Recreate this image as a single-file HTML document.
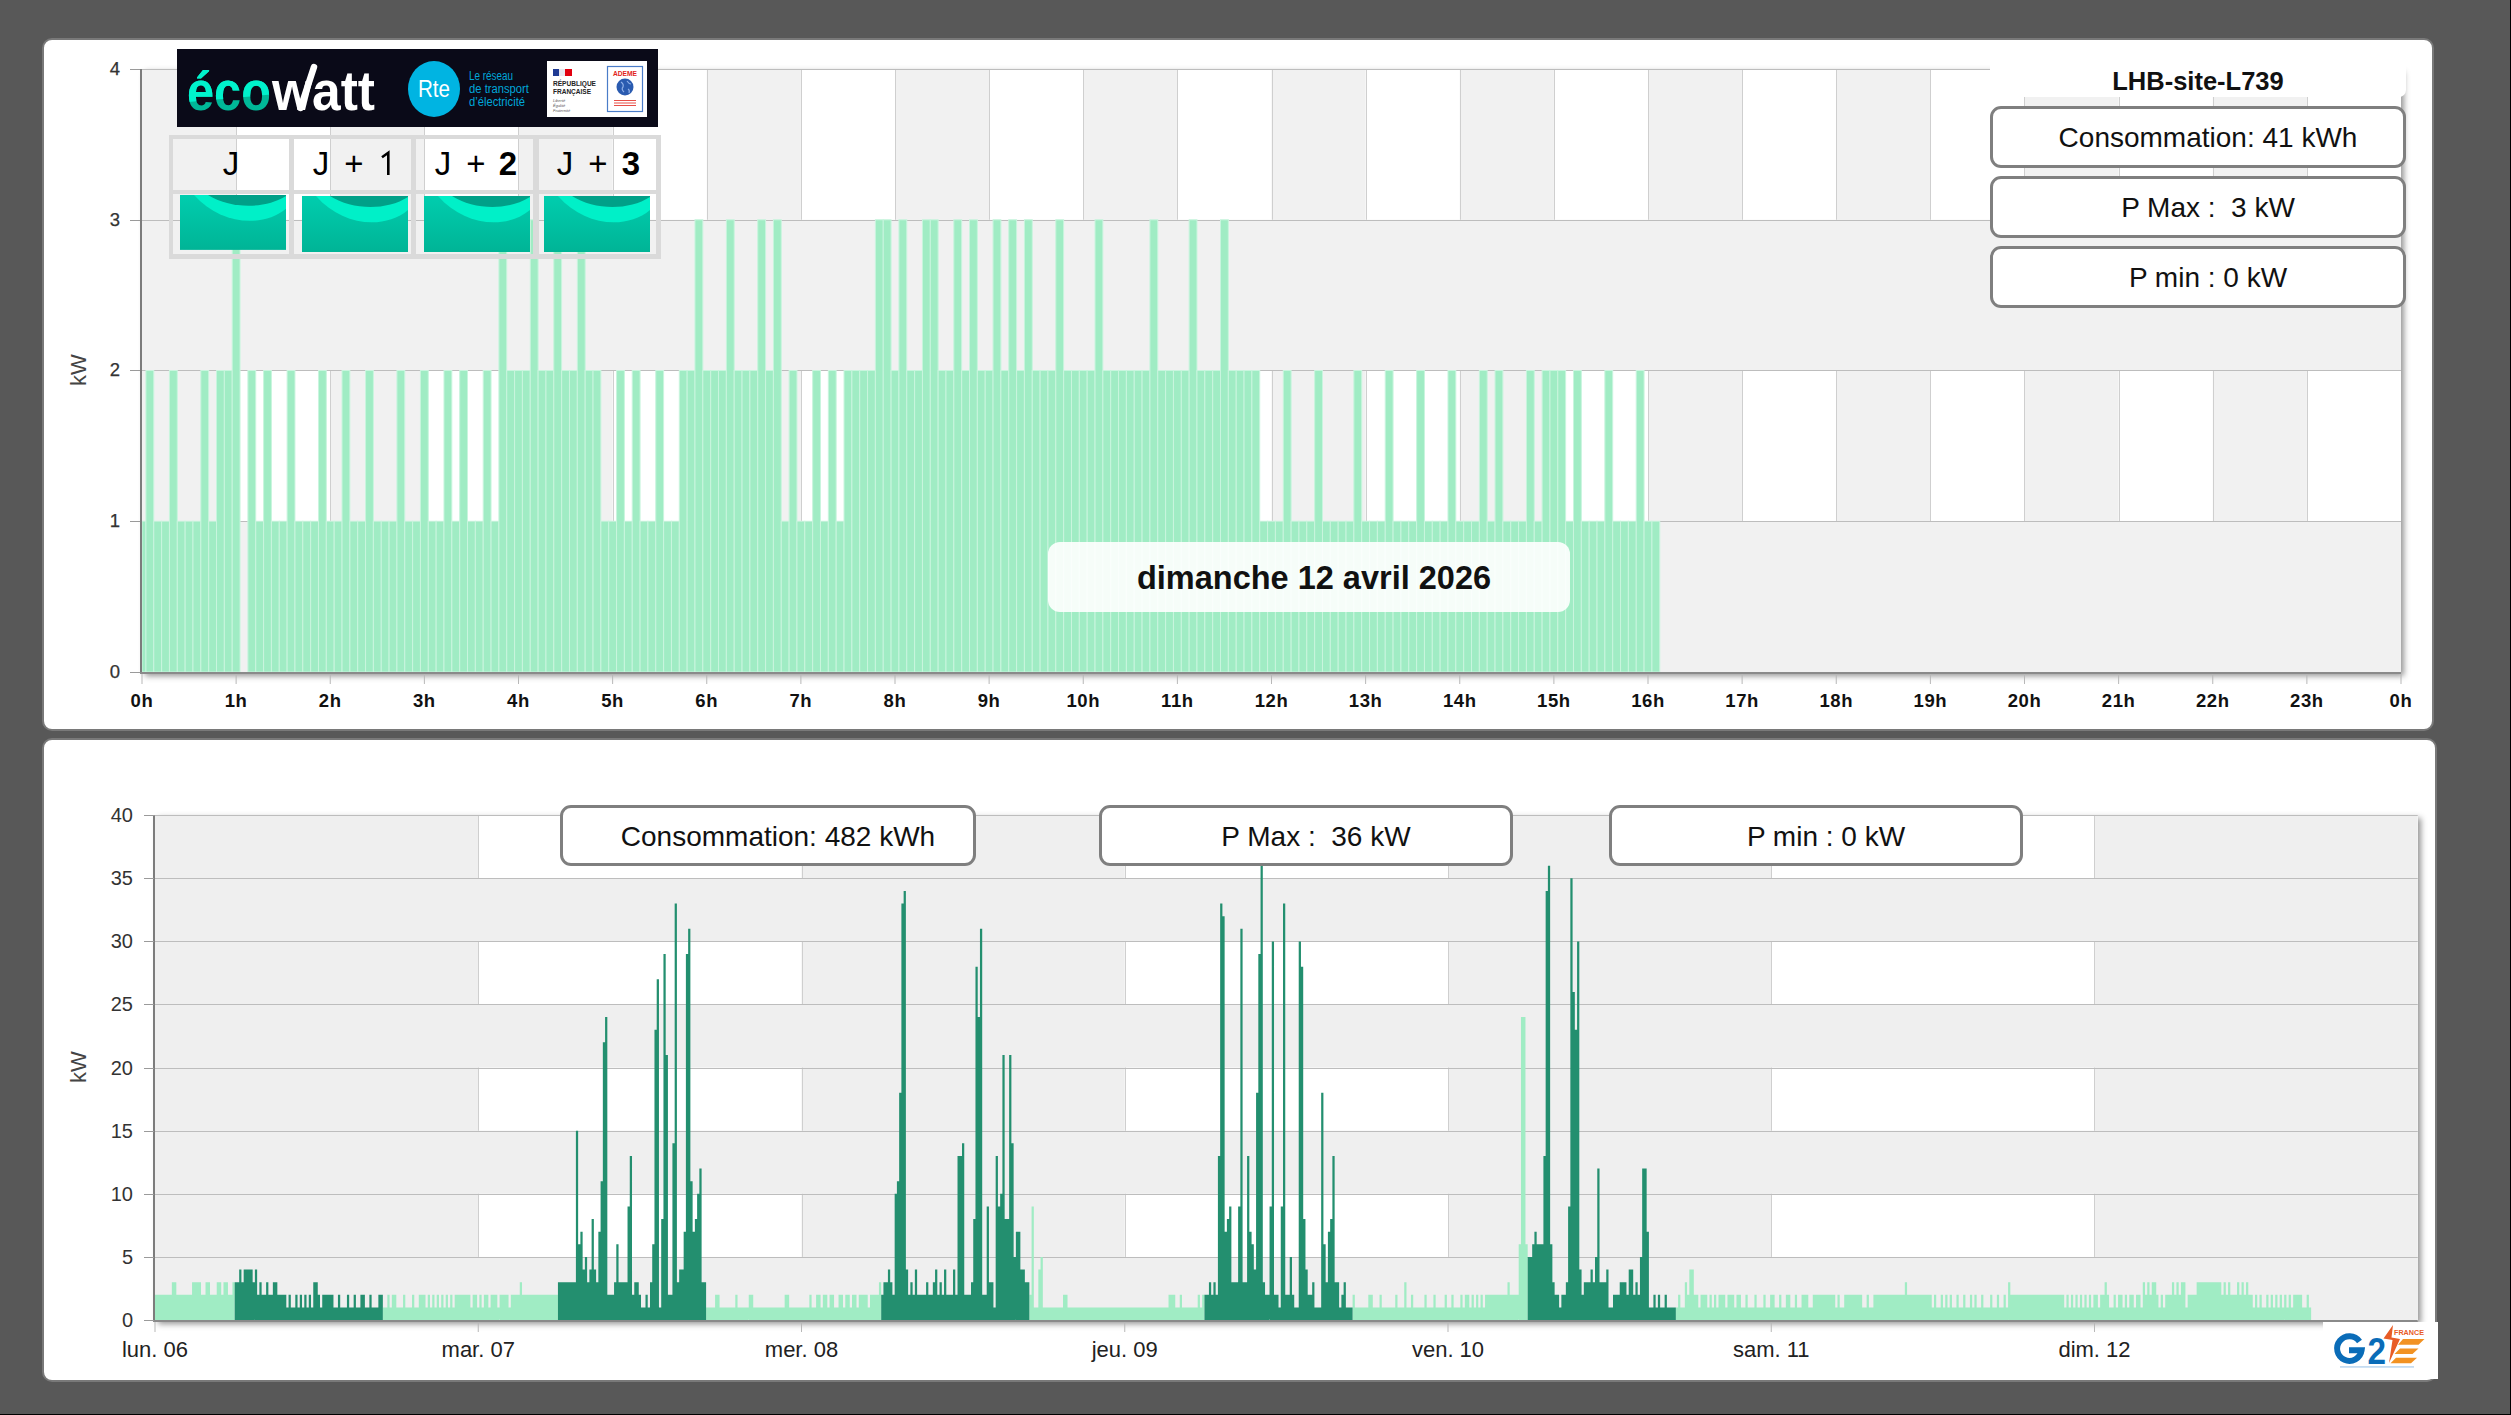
<!DOCTYPE html><html><head><meta charset="utf-8"><style>
*{margin:0;padding:0;box-sizing:border-box}
html,body{width:2511px;height:1415px;overflow:hidden;background:#585858;font-family:"Liberation Sans",sans-serif}
.panel{position:absolute;background:#fff;border:2px solid #797979;border-radius:10px}
.box{position:absolute;border:3px solid #7f7f7f;border-radius:11px;background:#fff;font-size:28px;color:#111;text-align:center;display:flex;align-items:center;justify-content:center;white-space:pre;padding:2px 0 0 20px}
.abs{position:absolute}
</style></head><body>
<div class="abs" style="left:2510px;top:0;width:1px;height:1415px;background:#000"></div>
<div class="abs" style="left:0;top:1414px;width:2511px;height:1px;background:#000"></div>
<div class="panel" style="left:42px;top:38px;width:2392px;height:693px"></div>
<div class="panel" style="left:42px;top:738px;width:2395px;height:644px"></div>
<div class="abs" style="left:142px;top:69px;width:2259px;height:604px;box-shadow:3px 3px 6px rgba(0,0,0,0.42)"></div>
<div class="abs" style="left:155.0px;top:815.2px;width:2262.8px;height:505.8px;box-shadow:3px 3px 6px rgba(0,0,0,0.42)"></div>
<svg width="2511" height="1415" style="position:absolute;left:0;top:0">
<defs><linearGradient id="shr" x1="0" x2="1" y1="0" y2="0"><stop offset="0" stop-color="#000" stop-opacity="0.36"/><stop offset="1" stop-color="#000" stop-opacity="0"/></linearGradient><linearGradient id="shb" x1="0" x2="0" y1="0" y2="1"><stop offset="0" stop-color="#000" stop-opacity="0.28"/><stop offset="1" stop-color="#000" stop-opacity="0"/></linearGradient></defs>
<rect x="142" y="69" width="2259" height="603" fill="#fff"/>
<rect x="142.00" y="69" width="94.12" height="603" fill="#f1f1f1"/>
<rect x="330.25" y="69" width="94.12" height="603" fill="#f1f1f1"/>
<rect x="518.50" y="69" width="94.12" height="603" fill="#f1f1f1"/>
<rect x="706.75" y="69" width="94.12" height="603" fill="#f1f1f1"/>
<rect x="895.00" y="69" width="94.12" height="603" fill="#f1f1f1"/>
<rect x="1083.25" y="69" width="94.12" height="603" fill="#f1f1f1"/>
<rect x="1271.50" y="69" width="94.12" height="603" fill="#f1f1f1"/>
<rect x="1459.75" y="69" width="94.12" height="603" fill="#f1f1f1"/>
<rect x="1648.00" y="69" width="94.12" height="603" fill="#f1f1f1"/>
<rect x="1836.25" y="69" width="94.12" height="603" fill="#f1f1f1"/>
<rect x="2024.50" y="69" width="94.12" height="603" fill="#f1f1f1"/>
<rect x="2212.75" y="69" width="94.12" height="603" fill="#f1f1f1"/>
<line x1="236.5" y1="69" x2="236.5" y2="672" stroke="#cfcfcf" stroke-width="1"/>
<line x1="330.5" y1="69" x2="330.5" y2="672" stroke="#cfcfcf" stroke-width="1"/>
<line x1="424.5" y1="69" x2="424.5" y2="672" stroke="#cfcfcf" stroke-width="1"/>
<line x1="518.5" y1="69" x2="518.5" y2="672" stroke="#cfcfcf" stroke-width="1"/>
<line x1="613.5" y1="69" x2="613.5" y2="672" stroke="#cfcfcf" stroke-width="1"/>
<line x1="707.5" y1="69" x2="707.5" y2="672" stroke="#cfcfcf" stroke-width="1"/>
<line x1="801.5" y1="69" x2="801.5" y2="672" stroke="#cfcfcf" stroke-width="1"/>
<line x1="895.5" y1="69" x2="895.5" y2="672" stroke="#cfcfcf" stroke-width="1"/>
<line x1="989.5" y1="69" x2="989.5" y2="672" stroke="#cfcfcf" stroke-width="1"/>
<line x1="1083.5" y1="69" x2="1083.5" y2="672" stroke="#cfcfcf" stroke-width="1"/>
<line x1="1177.5" y1="69" x2="1177.5" y2="672" stroke="#cfcfcf" stroke-width="1"/>
<line x1="1272.5" y1="69" x2="1272.5" y2="672" stroke="#cfcfcf" stroke-width="1"/>
<line x1="1366.5" y1="69" x2="1366.5" y2="672" stroke="#cfcfcf" stroke-width="1"/>
<line x1="1460.5" y1="69" x2="1460.5" y2="672" stroke="#cfcfcf" stroke-width="1"/>
<line x1="1554.5" y1="69" x2="1554.5" y2="672" stroke="#cfcfcf" stroke-width="1"/>
<line x1="1648.5" y1="69" x2="1648.5" y2="672" stroke="#cfcfcf" stroke-width="1"/>
<line x1="1742.5" y1="69" x2="1742.5" y2="672" stroke="#cfcfcf" stroke-width="1"/>
<line x1="1836.5" y1="69" x2="1836.5" y2="672" stroke="#cfcfcf" stroke-width="1"/>
<line x1="1930.5" y1="69" x2="1930.5" y2="672" stroke="#cfcfcf" stroke-width="1"/>
<line x1="2024.5" y1="69" x2="2024.5" y2="672" stroke="#cfcfcf" stroke-width="1"/>
<line x1="2119.5" y1="69" x2="2119.5" y2="672" stroke="#cfcfcf" stroke-width="1"/>
<line x1="2213.5" y1="69" x2="2213.5" y2="672" stroke="#cfcfcf" stroke-width="1"/>
<line x1="2307.5" y1="69" x2="2307.5" y2="672" stroke="#cfcfcf" stroke-width="1"/>
<rect x="142" y="521.25" width="2259" height="150.75" fill="#f1f1f1"/>
<rect x="142" y="219.75" width="2259" height="150.75" fill="#f1f1f1"/>
<line x1="142" y1="521.5" x2="2401" y2="521.5" stroke="#bdbdbd" stroke-width="1"/>
<line x1="142" y1="370.5" x2="2401" y2="370.5" stroke="#bdbdbd" stroke-width="1"/>
<line x1="142" y1="220.5" x2="2401" y2="220.5" stroke="#bdbdbd" stroke-width="1"/>
<line x1="142" y1="69.5" x2="2401" y2="69.5" stroke="#bdbdbd" stroke-width="1"/>
<g fill="#a0ecc4" stroke="#c9f5de" stroke-width="1">
<rect x="142.00" y="521.25" width="3.92" height="150.75"/>
<rect x="145.92" y="370.50" width="7.84" height="301.50"/>
<rect x="153.77" y="521.25" width="7.84" height="150.75"/>
<rect x="161.61" y="521.25" width="7.84" height="150.75"/>
<rect x="169.45" y="370.50" width="7.84" height="301.50"/>
<rect x="177.30" y="521.25" width="7.84" height="150.75"/>
<rect x="185.14" y="521.25" width="7.84" height="150.75"/>
<rect x="192.98" y="521.25" width="7.84" height="150.75"/>
<rect x="200.83" y="370.50" width="7.84" height="301.50"/>
<rect x="208.67" y="521.25" width="7.84" height="150.75"/>
<rect x="216.52" y="370.50" width="7.84" height="301.50"/>
<rect x="224.36" y="370.50" width="7.84" height="301.50"/>
<rect x="232.20" y="219.75" width="7.84" height="452.25"/>
<rect x="247.89" y="370.50" width="7.84" height="301.50"/>
<rect x="255.73" y="521.25" width="7.84" height="150.75"/>
<rect x="263.58" y="370.50" width="7.84" height="301.50"/>
<rect x="271.42" y="521.25" width="7.84" height="150.75"/>
<rect x="279.27" y="521.25" width="7.84" height="150.75"/>
<rect x="287.11" y="370.50" width="7.84" height="301.50"/>
<rect x="294.95" y="521.25" width="7.84" height="150.75"/>
<rect x="302.80" y="521.25" width="7.84" height="150.75"/>
<rect x="310.64" y="521.25" width="7.84" height="150.75"/>
<rect x="318.48" y="370.50" width="7.84" height="301.50"/>
<rect x="326.33" y="521.25" width="7.84" height="150.75"/>
<rect x="334.17" y="521.25" width="7.84" height="150.75"/>
<rect x="342.02" y="370.50" width="7.84" height="301.50"/>
<rect x="349.86" y="521.25" width="7.84" height="150.75"/>
<rect x="357.70" y="521.25" width="7.84" height="150.75"/>
<rect x="365.55" y="370.50" width="7.84" height="301.50"/>
<rect x="373.39" y="521.25" width="7.84" height="150.75"/>
<rect x="381.23" y="521.25" width="7.84" height="150.75"/>
<rect x="389.08" y="521.25" width="7.84" height="150.75"/>
<rect x="396.92" y="370.50" width="7.84" height="301.50"/>
<rect x="404.77" y="521.25" width="7.84" height="150.75"/>
<rect x="412.61" y="521.25" width="7.84" height="150.75"/>
<rect x="420.45" y="370.50" width="7.84" height="301.50"/>
<rect x="428.30" y="521.25" width="7.84" height="150.75"/>
<rect x="436.14" y="521.25" width="7.84" height="150.75"/>
<rect x="443.98" y="370.50" width="7.84" height="301.50"/>
<rect x="451.83" y="521.25" width="7.84" height="150.75"/>
<rect x="459.67" y="370.50" width="7.84" height="301.50"/>
<rect x="467.52" y="521.25" width="7.84" height="150.75"/>
<rect x="475.36" y="521.25" width="7.84" height="150.75"/>
<rect x="483.20" y="370.50" width="7.84" height="301.50"/>
<rect x="491.05" y="521.25" width="7.84" height="150.75"/>
<rect x="498.89" y="219.75" width="7.84" height="452.25"/>
<rect x="506.73" y="370.50" width="7.84" height="301.50"/>
<rect x="514.58" y="370.50" width="7.84" height="301.50"/>
<rect x="522.42" y="370.50" width="7.84" height="301.50"/>
<rect x="530.27" y="219.75" width="7.84" height="452.25"/>
<rect x="538.11" y="370.50" width="7.84" height="301.50"/>
<rect x="545.95" y="370.50" width="7.84" height="301.50"/>
<rect x="553.80" y="219.75" width="7.84" height="452.25"/>
<rect x="561.64" y="370.50" width="7.84" height="301.50"/>
<rect x="569.48" y="370.50" width="7.84" height="301.50"/>
<rect x="577.33" y="219.75" width="7.84" height="452.25"/>
<rect x="585.17" y="370.50" width="7.84" height="301.50"/>
<rect x="593.02" y="370.50" width="7.84" height="301.50"/>
<rect x="600.86" y="521.25" width="7.84" height="150.75"/>
<rect x="608.70" y="521.25" width="7.84" height="150.75"/>
<rect x="616.55" y="370.50" width="7.84" height="301.50"/>
<rect x="624.39" y="521.25" width="7.84" height="150.75"/>
<rect x="632.23" y="370.50" width="7.84" height="301.50"/>
<rect x="640.08" y="521.25" width="7.84" height="150.75"/>
<rect x="647.92" y="521.25" width="7.84" height="150.75"/>
<rect x="655.77" y="370.50" width="7.84" height="301.50"/>
<rect x="663.61" y="521.25" width="7.84" height="150.75"/>
<rect x="671.45" y="521.25" width="7.84" height="150.75"/>
<rect x="679.30" y="370.50" width="7.84" height="301.50"/>
<rect x="687.14" y="370.50" width="7.84" height="301.50"/>
<rect x="694.98" y="219.75" width="7.84" height="452.25"/>
<rect x="702.83" y="370.50" width="7.84" height="301.50"/>
<rect x="710.67" y="370.50" width="7.84" height="301.50"/>
<rect x="718.52" y="370.50" width="7.84" height="301.50"/>
<rect x="726.36" y="219.75" width="7.84" height="452.25"/>
<rect x="734.20" y="370.50" width="7.84" height="301.50"/>
<rect x="742.05" y="370.50" width="7.84" height="301.50"/>
<rect x="749.89" y="370.50" width="7.84" height="301.50"/>
<rect x="757.73" y="219.75" width="7.84" height="452.25"/>
<rect x="765.58" y="370.50" width="7.84" height="301.50"/>
<rect x="773.42" y="219.75" width="7.84" height="452.25"/>
<rect x="781.27" y="521.25" width="7.84" height="150.75"/>
<rect x="789.11" y="370.50" width="7.84" height="301.50"/>
<rect x="796.95" y="521.25" width="7.84" height="150.75"/>
<rect x="804.80" y="521.25" width="7.84" height="150.75"/>
<rect x="812.64" y="370.50" width="7.84" height="301.50"/>
<rect x="820.48" y="521.25" width="7.84" height="150.75"/>
<rect x="828.33" y="370.50" width="7.84" height="301.50"/>
<rect x="836.17" y="521.25" width="7.84" height="150.75"/>
<rect x="844.02" y="370.50" width="7.84" height="301.50"/>
<rect x="851.86" y="370.50" width="7.84" height="301.50"/>
<rect x="859.70" y="370.50" width="7.84" height="301.50"/>
<rect x="867.55" y="370.50" width="7.84" height="301.50"/>
<rect x="875.39" y="219.75" width="7.84" height="452.25"/>
<rect x="883.23" y="219.75" width="7.84" height="452.25"/>
<rect x="891.08" y="370.50" width="7.84" height="301.50"/>
<rect x="898.92" y="219.75" width="7.84" height="452.25"/>
<rect x="906.77" y="370.50" width="7.84" height="301.50"/>
<rect x="914.61" y="370.50" width="7.84" height="301.50"/>
<rect x="922.45" y="219.75" width="7.84" height="452.25"/>
<rect x="930.30" y="219.75" width="7.84" height="452.25"/>
<rect x="938.14" y="370.50" width="7.84" height="301.50"/>
<rect x="945.98" y="370.50" width="7.84" height="301.50"/>
<rect x="953.83" y="219.75" width="7.84" height="452.25"/>
<rect x="961.67" y="370.50" width="7.84" height="301.50"/>
<rect x="969.52" y="219.75" width="7.84" height="452.25"/>
<rect x="977.36" y="370.50" width="7.84" height="301.50"/>
<rect x="985.20" y="370.50" width="7.84" height="301.50"/>
<rect x="993.05" y="219.75" width="7.84" height="452.25"/>
<rect x="1000.89" y="370.50" width="7.84" height="301.50"/>
<rect x="1008.73" y="219.75" width="7.84" height="452.25"/>
<rect x="1016.58" y="370.50" width="7.84" height="301.50"/>
<rect x="1024.42" y="219.75" width="7.84" height="452.25"/>
<rect x="1032.27" y="370.50" width="7.84" height="301.50"/>
<rect x="1040.11" y="370.50" width="7.84" height="301.50"/>
<rect x="1047.95" y="370.50" width="7.84" height="301.50"/>
<rect x="1055.80" y="219.75" width="7.84" height="452.25"/>
<rect x="1063.64" y="370.50" width="7.84" height="301.50"/>
<rect x="1071.48" y="370.50" width="7.84" height="301.50"/>
<rect x="1079.33" y="370.50" width="7.84" height="301.50"/>
<rect x="1087.17" y="370.50" width="7.84" height="301.50"/>
<rect x="1095.02" y="219.75" width="7.84" height="452.25"/>
<rect x="1102.86" y="370.50" width="7.84" height="301.50"/>
<rect x="1110.70" y="370.50" width="7.84" height="301.50"/>
<rect x="1118.55" y="370.50" width="7.84" height="301.50"/>
<rect x="1126.39" y="370.50" width="7.84" height="301.50"/>
<rect x="1134.23" y="370.50" width="7.84" height="301.50"/>
<rect x="1142.08" y="370.50" width="7.84" height="301.50"/>
<rect x="1149.92" y="219.75" width="7.84" height="452.25"/>
<rect x="1157.77" y="370.50" width="7.84" height="301.50"/>
<rect x="1165.61" y="370.50" width="7.84" height="301.50"/>
<rect x="1173.45" y="370.50" width="7.84" height="301.50"/>
<rect x="1181.30" y="370.50" width="7.84" height="301.50"/>
<rect x="1189.14" y="219.75" width="7.84" height="452.25"/>
<rect x="1196.98" y="370.50" width="7.84" height="301.50"/>
<rect x="1204.83" y="370.50" width="7.84" height="301.50"/>
<rect x="1212.67" y="370.50" width="7.84" height="301.50"/>
<rect x="1220.52" y="219.75" width="7.84" height="452.25"/>
<rect x="1228.36" y="370.50" width="7.84" height="301.50"/>
<rect x="1236.20" y="370.50" width="7.84" height="301.50"/>
<rect x="1244.05" y="370.50" width="7.84" height="301.50"/>
<rect x="1251.89" y="370.50" width="7.84" height="301.50"/>
<rect x="1259.73" y="521.25" width="7.84" height="150.75"/>
<rect x="1267.58" y="521.25" width="7.84" height="150.75"/>
<rect x="1275.42" y="521.25" width="7.84" height="150.75"/>
<rect x="1283.27" y="370.50" width="7.84" height="301.50"/>
<rect x="1291.11" y="521.25" width="7.84" height="150.75"/>
<rect x="1298.95" y="521.25" width="7.84" height="150.75"/>
<rect x="1306.80" y="521.25" width="7.84" height="150.75"/>
<rect x="1314.64" y="370.50" width="7.84" height="301.50"/>
<rect x="1322.48" y="521.25" width="7.84" height="150.75"/>
<rect x="1330.33" y="521.25" width="7.84" height="150.75"/>
<rect x="1338.17" y="521.25" width="7.84" height="150.75"/>
<rect x="1346.02" y="521.25" width="7.84" height="150.75"/>
<rect x="1353.86" y="370.50" width="7.84" height="301.50"/>
<rect x="1361.70" y="521.25" width="7.84" height="150.75"/>
<rect x="1369.55" y="521.25" width="7.84" height="150.75"/>
<rect x="1377.39" y="521.25" width="7.84" height="150.75"/>
<rect x="1385.23" y="370.50" width="7.84" height="301.50"/>
<rect x="1393.08" y="521.25" width="7.84" height="150.75"/>
<rect x="1400.92" y="521.25" width="7.84" height="150.75"/>
<rect x="1408.77" y="521.25" width="7.84" height="150.75"/>
<rect x="1416.61" y="370.50" width="7.84" height="301.50"/>
<rect x="1424.45" y="521.25" width="7.84" height="150.75"/>
<rect x="1432.30" y="521.25" width="7.84" height="150.75"/>
<rect x="1440.14" y="521.25" width="7.84" height="150.75"/>
<rect x="1447.98" y="370.50" width="7.84" height="301.50"/>
<rect x="1455.83" y="521.25" width="7.84" height="150.75"/>
<rect x="1463.67" y="521.25" width="7.84" height="150.75"/>
<rect x="1471.52" y="521.25" width="7.84" height="150.75"/>
<rect x="1479.36" y="370.50" width="7.84" height="301.50"/>
<rect x="1487.20" y="521.25" width="7.84" height="150.75"/>
<rect x="1495.05" y="370.50" width="7.84" height="301.50"/>
<rect x="1502.89" y="521.25" width="7.84" height="150.75"/>
<rect x="1510.73" y="521.25" width="7.84" height="150.75"/>
<rect x="1518.58" y="521.25" width="7.84" height="150.75"/>
<rect x="1526.42" y="370.50" width="7.84" height="301.50"/>
<rect x="1534.27" y="521.25" width="7.84" height="150.75"/>
<rect x="1542.11" y="370.50" width="7.84" height="301.50"/>
<rect x="1549.95" y="370.50" width="7.84" height="301.50"/>
<rect x="1557.80" y="370.50" width="7.84" height="301.50"/>
<rect x="1565.64" y="521.25" width="7.84" height="150.75"/>
<rect x="1573.48" y="370.50" width="7.84" height="301.50"/>
<rect x="1581.33" y="521.25" width="7.84" height="150.75"/>
<rect x="1589.17" y="521.25" width="7.84" height="150.75"/>
<rect x="1597.02" y="521.25" width="7.84" height="150.75"/>
<rect x="1604.86" y="370.50" width="7.84" height="301.50"/>
<rect x="1612.70" y="521.25" width="7.84" height="150.75"/>
<rect x="1620.55" y="521.25" width="7.84" height="150.75"/>
<rect x="1628.39" y="521.25" width="7.84" height="150.75"/>
<rect x="1636.23" y="370.50" width="7.84" height="301.50"/>
<rect x="1644.08" y="521.25" width="7.84" height="150.75"/>
<rect x="1651.92" y="521.25" width="7.84" height="150.75"/>
</g>
<rect x="140" y="69" width="2" height="605" fill="#7c7c7c"/>
<rect x="140" y="672" width="2261" height="2" fill="#8a8a8a"/>
<rect x="130" y="672" width="10" height="1" fill="#9a9a9a"/>
<text x="120" y="678" text-anchor="end" font-family="Liberation Sans" font-size="18.5" fill="#333" stroke="#333" stroke-width="0.25">0</text>
<rect x="130" y="521" width="10" height="1" fill="#9a9a9a"/>
<text x="120" y="527" text-anchor="end" font-family="Liberation Sans" font-size="18.5" fill="#333" stroke="#333" stroke-width="0.25">1</text>
<rect x="130" y="370" width="10" height="1" fill="#9a9a9a"/>
<text x="120" y="376" text-anchor="end" font-family="Liberation Sans" font-size="18.5" fill="#333" stroke="#333" stroke-width="0.25">2</text>
<rect x="130" y="220" width="10" height="1" fill="#9a9a9a"/>
<text x="120" y="226" text-anchor="end" font-family="Liberation Sans" font-size="18.5" fill="#333" stroke="#333" stroke-width="0.25">3</text>
<rect x="130" y="69" width="10" height="1" fill="#9a9a9a"/>
<text x="120" y="75" text-anchor="end" font-family="Liberation Sans" font-size="18.5" fill="#333" stroke="#333" stroke-width="0.25">4</text>
<rect x="141.50" y="674" width="1" height="10" fill="#b8b8b8"/>
<text x="142.00" y="707" text-anchor="middle" font-family="Liberation Sans" font-weight="bold" font-size="18.5" letter-spacing="0.6" fill="#111">0h</text>
<rect x="235.62" y="674" width="1" height="10" fill="#b8b8b8"/>
<text x="236.12" y="707" text-anchor="middle" font-family="Liberation Sans" font-weight="bold" font-size="18.5" letter-spacing="0.6" fill="#111">1h</text>
<rect x="329.75" y="674" width="1" height="10" fill="#b8b8b8"/>
<text x="330.25" y="707" text-anchor="middle" font-family="Liberation Sans" font-weight="bold" font-size="18.5" letter-spacing="0.6" fill="#111">2h</text>
<rect x="423.88" y="674" width="1" height="10" fill="#b8b8b8"/>
<text x="424.38" y="707" text-anchor="middle" font-family="Liberation Sans" font-weight="bold" font-size="18.5" letter-spacing="0.6" fill="#111">3h</text>
<rect x="518.00" y="674" width="1" height="10" fill="#b8b8b8"/>
<text x="518.50" y="707" text-anchor="middle" font-family="Liberation Sans" font-weight="bold" font-size="18.5" letter-spacing="0.6" fill="#111">4h</text>
<rect x="612.12" y="674" width="1" height="10" fill="#b8b8b8"/>
<text x="612.62" y="707" text-anchor="middle" font-family="Liberation Sans" font-weight="bold" font-size="18.5" letter-spacing="0.6" fill="#111">5h</text>
<rect x="706.25" y="674" width="1" height="10" fill="#b8b8b8"/>
<text x="706.75" y="707" text-anchor="middle" font-family="Liberation Sans" font-weight="bold" font-size="18.5" letter-spacing="0.6" fill="#111">6h</text>
<rect x="800.38" y="674" width="1" height="10" fill="#b8b8b8"/>
<text x="800.88" y="707" text-anchor="middle" font-family="Liberation Sans" font-weight="bold" font-size="18.5" letter-spacing="0.6" fill="#111">7h</text>
<rect x="894.50" y="674" width="1" height="10" fill="#b8b8b8"/>
<text x="895.00" y="707" text-anchor="middle" font-family="Liberation Sans" font-weight="bold" font-size="18.5" letter-spacing="0.6" fill="#111">8h</text>
<rect x="988.62" y="674" width="1" height="10" fill="#b8b8b8"/>
<text x="989.12" y="707" text-anchor="middle" font-family="Liberation Sans" font-weight="bold" font-size="18.5" letter-spacing="0.6" fill="#111">9h</text>
<rect x="1082.75" y="674" width="1" height="10" fill="#b8b8b8"/>
<text x="1083.25" y="707" text-anchor="middle" font-family="Liberation Sans" font-weight="bold" font-size="18.5" letter-spacing="0.6" fill="#111">10h</text>
<rect x="1176.88" y="674" width="1" height="10" fill="#b8b8b8"/>
<text x="1177.38" y="707" text-anchor="middle" font-family="Liberation Sans" font-weight="bold" font-size="18.5" letter-spacing="0.6" fill="#111">11h</text>
<rect x="1271.00" y="674" width="1" height="10" fill="#b8b8b8"/>
<text x="1271.50" y="707" text-anchor="middle" font-family="Liberation Sans" font-weight="bold" font-size="18.5" letter-spacing="0.6" fill="#111">12h</text>
<rect x="1365.12" y="674" width="1" height="10" fill="#b8b8b8"/>
<text x="1365.62" y="707" text-anchor="middle" font-family="Liberation Sans" font-weight="bold" font-size="18.5" letter-spacing="0.6" fill="#111">13h</text>
<rect x="1459.25" y="674" width="1" height="10" fill="#b8b8b8"/>
<text x="1459.75" y="707" text-anchor="middle" font-family="Liberation Sans" font-weight="bold" font-size="18.5" letter-spacing="0.6" fill="#111">14h</text>
<rect x="1553.38" y="674" width="1" height="10" fill="#b8b8b8"/>
<text x="1553.88" y="707" text-anchor="middle" font-family="Liberation Sans" font-weight="bold" font-size="18.5" letter-spacing="0.6" fill="#111">15h</text>
<rect x="1647.50" y="674" width="1" height="10" fill="#b8b8b8"/>
<text x="1648.00" y="707" text-anchor="middle" font-family="Liberation Sans" font-weight="bold" font-size="18.5" letter-spacing="0.6" fill="#111">16h</text>
<rect x="1741.62" y="674" width="1" height="10" fill="#b8b8b8"/>
<text x="1742.12" y="707" text-anchor="middle" font-family="Liberation Sans" font-weight="bold" font-size="18.5" letter-spacing="0.6" fill="#111">17h</text>
<rect x="1835.75" y="674" width="1" height="10" fill="#b8b8b8"/>
<text x="1836.25" y="707" text-anchor="middle" font-family="Liberation Sans" font-weight="bold" font-size="18.5" letter-spacing="0.6" fill="#111">18h</text>
<rect x="1929.88" y="674" width="1" height="10" fill="#b8b8b8"/>
<text x="1930.38" y="707" text-anchor="middle" font-family="Liberation Sans" font-weight="bold" font-size="18.5" letter-spacing="0.6" fill="#111">19h</text>
<rect x="2024.00" y="674" width="1" height="10" fill="#b8b8b8"/>
<text x="2024.50" y="707" text-anchor="middle" font-family="Liberation Sans" font-weight="bold" font-size="18.5" letter-spacing="0.6" fill="#111">20h</text>
<rect x="2118.12" y="674" width="1" height="10" fill="#b8b8b8"/>
<text x="2118.62" y="707" text-anchor="middle" font-family="Liberation Sans" font-weight="bold" font-size="18.5" letter-spacing="0.6" fill="#111">21h</text>
<rect x="2212.25" y="674" width="1" height="10" fill="#b8b8b8"/>
<text x="2212.75" y="707" text-anchor="middle" font-family="Liberation Sans" font-weight="bold" font-size="18.5" letter-spacing="0.6" fill="#111">22h</text>
<rect x="2306.38" y="674" width="1" height="10" fill="#b8b8b8"/>
<text x="2306.88" y="707" text-anchor="middle" font-family="Liberation Sans" font-weight="bold" font-size="18.5" letter-spacing="0.6" fill="#111">23h</text>
<rect x="2400.50" y="674" width="1" height="10" fill="#b8b8b8"/>
<text x="2401.00" y="707" text-anchor="middle" font-family="Liberation Sans" font-weight="bold" font-size="18.5" letter-spacing="0.6" fill="#111">0h</text>
<text transform="translate(86,370) rotate(-90)" text-anchor="middle" font-family="Liberation Sans" font-size="22" fill="#444">kW</text>
</svg>
<svg width="2511" height="1415" style="position:absolute;left:0;top:0">
<rect x="155.0" y="815.2" width="2262.75" height="504.79999999999995" fill="#fff"/>
<rect x="155.00" y="815.2" width="323.25" height="504.79999999999995" fill="#efefef"/>
<rect x="801.50" y="815.2" width="323.25" height="504.79999999999995" fill="#efefef"/>
<rect x="1448.00" y="815.2" width="323.25" height="504.79999999999995" fill="#efefef"/>
<rect x="2094.50" y="815.2" width="323.25" height="504.79999999999995" fill="#efefef"/>
<line x1="478.5" y1="815.2" x2="478.5" y2="1320.0" stroke="#cfcfcf" stroke-width="1"/>
<line x1="802.5" y1="815.2" x2="802.5" y2="1320.0" stroke="#cfcfcf" stroke-width="1"/>
<line x1="1125.5" y1="815.2" x2="1125.5" y2="1320.0" stroke="#cfcfcf" stroke-width="1"/>
<line x1="1448.5" y1="815.2" x2="1448.5" y2="1320.0" stroke="#cfcfcf" stroke-width="1"/>
<line x1="1771.5" y1="815.2" x2="1771.5" y2="1320.0" stroke="#cfcfcf" stroke-width="1"/>
<line x1="2094.5" y1="815.2" x2="2094.5" y2="1320.0" stroke="#cfcfcf" stroke-width="1"/>
<rect x="155.0" y="1256.90" width="2262.75" height="63.10" fill="#efefef"/>
<rect x="155.0" y="1130.70" width="2262.75" height="63.10" fill="#efefef"/>
<rect x="155.0" y="1004.50" width="2262.75" height="63.10" fill="#efefef"/>
<rect x="155.0" y="878.30" width="2262.75" height="63.10" fill="#efefef"/>
<line x1="155.0" y1="1257.5" x2="2417.75" y2="1257.5" stroke="#bdbdbd" stroke-width="1"/>
<line x1="155.0" y1="1194.5" x2="2417.75" y2="1194.5" stroke="#bdbdbd" stroke-width="1"/>
<line x1="155.0" y1="1131.5" x2="2417.75" y2="1131.5" stroke="#bdbdbd" stroke-width="1"/>
<line x1="155.0" y1="1068.5" x2="2417.75" y2="1068.5" stroke="#bdbdbd" stroke-width="1"/>
<line x1="155.0" y1="1004.5" x2="2417.75" y2="1004.5" stroke="#bdbdbd" stroke-width="1"/>
<line x1="155.0" y1="941.5" x2="2417.75" y2="941.5" stroke="#bdbdbd" stroke-width="1"/>
<line x1="155.0" y1="878.5" x2="2417.75" y2="878.5" stroke="#bdbdbd" stroke-width="1"/>
<line x1="155.0" y1="815.5" x2="2417.75" y2="815.5" stroke="#bdbdbd" stroke-width="1"/>
<path d="M155.00 1294.76H171.84V1320.0H155.00ZM171.84 1282.14H176.33V1320.0H171.84ZM176.33 1294.76H192.04V1320.0H176.33ZM192.04 1282.14H201.02V1320.0H192.04ZM201.02 1294.76H205.51V1320.0H201.02ZM205.51 1282.14H210.00V1320.0H205.51ZM210.00 1294.76H216.73V1320.0H210.00ZM216.73 1282.14H221.22V1320.0H216.73ZM221.22 1294.76H223.47V1320.0H221.22ZM223.47 1282.14H227.96V1320.0H223.47ZM227.96 1294.76H232.45V1320.0H227.96ZM232.45 1282.14H234.69V1320.0H232.45ZM382.85 1307.38H387.34V1320.0H382.85ZM387.34 1294.76H389.58V1320.0H387.34ZM389.58 1307.38H391.83V1320.0H389.58ZM391.83 1294.76H396.32V1320.0H391.83ZM396.32 1307.38H403.05V1320.0H396.32ZM403.05 1294.76H405.29V1320.0H403.05ZM405.29 1307.38H412.03V1320.0H405.29ZM412.03 1294.76H414.27V1320.0H412.03ZM414.27 1307.38H418.76V1320.0H414.27ZM418.76 1294.76H425.50V1320.0H418.76ZM425.50 1307.38H427.74V1320.0H425.50ZM427.74 1294.76H429.99V1320.0H427.74ZM429.99 1307.38H432.23V1320.0H429.99ZM432.23 1294.76H434.48V1320.0H432.23ZM434.48 1307.38H436.72V1320.0H434.48ZM436.72 1294.76H438.97V1320.0H436.72ZM438.97 1307.38H441.21V1320.0H438.97ZM441.21 1294.76H443.46V1320.0H441.21ZM443.46 1307.38H445.70V1320.0H443.46ZM445.70 1294.76H447.95V1320.0H445.70ZM447.95 1307.38H450.19V1320.0H447.95ZM450.19 1294.76H452.43V1320.0H450.19ZM452.43 1307.38H454.68V1320.0H452.43ZM454.68 1294.76H470.39V1320.0H454.68ZM470.39 1307.38H472.64V1320.0H470.39ZM472.64 1294.76H477.13V1320.0H472.64ZM477.13 1307.38H479.37V1320.0H477.13ZM479.37 1294.76H481.62V1320.0H479.37ZM481.62 1307.38H483.86V1320.0H481.62ZM483.86 1294.76H488.35V1320.0H483.86ZM488.35 1307.38H490.60V1320.0H488.35ZM490.60 1294.76H497.33V1320.0H490.60ZM497.33 1307.38H499.58V1320.0H497.33ZM499.58 1294.76H508.55V1320.0H499.58ZM508.55 1307.38H510.80V1320.0H508.55ZM510.80 1294.76H519.78V1320.0H510.80ZM519.78 1282.14H522.02V1320.0H519.78ZM522.02 1294.76H557.94V1320.0H522.02ZM706.10 1307.38H715.08V1320.0H706.10ZM715.08 1294.76H719.57V1320.0H715.08ZM719.57 1307.38H735.28V1320.0H719.57ZM735.28 1294.76H737.52V1320.0H735.28ZM737.52 1307.38H748.75V1320.0H737.52ZM748.75 1294.76H753.24V1320.0H748.75ZM753.24 1307.38H784.66V1320.0H753.24ZM784.66 1294.76H789.15V1320.0H784.66ZM789.15 1307.38H809.36V1320.0H789.15ZM809.36 1294.76H811.60V1320.0H809.36ZM811.60 1307.38H816.09V1320.0H811.60ZM816.09 1294.76H820.58V1320.0H816.09ZM820.58 1307.38H822.83V1320.0H820.58ZM822.83 1294.76H827.32V1320.0H822.83ZM827.32 1307.38H829.56V1320.0H827.32ZM829.56 1294.76H834.05V1320.0H829.56ZM834.05 1307.38H838.54V1320.0H834.05ZM838.54 1294.76H843.03V1320.0H838.54ZM843.03 1307.38H845.27V1320.0H843.03ZM845.27 1294.76H849.76V1320.0H845.27ZM849.76 1307.38H852.01V1320.0H849.76ZM852.01 1294.76H856.50V1320.0H852.01ZM856.50 1307.38H858.74V1320.0H856.50ZM858.74 1294.76H867.72V1320.0H858.74ZM867.72 1307.38H869.97V1320.0H867.72ZM869.97 1294.76H878.95V1320.0H869.97ZM878.95 1282.14H881.19V1320.0H878.95ZM1029.35 1294.76H1031.59V1320.0H1029.35ZM1031.59 1206.42H1033.84V1320.0H1031.59ZM1033.84 1307.38H1038.33V1320.0H1033.84ZM1038.33 1269.52H1040.57V1320.0H1038.33ZM1040.57 1256.90H1042.82V1320.0H1040.57ZM1042.82 1307.38H1063.02V1320.0H1042.82ZM1063.02 1294.76H1067.51V1320.0H1063.02ZM1067.51 1307.38H1168.52V1320.0H1067.51ZM1168.52 1294.76H1175.26V1320.0H1168.52ZM1175.26 1307.38H1179.75V1320.0H1175.26ZM1179.75 1294.76H1181.99V1320.0H1179.75ZM1181.99 1307.38H1197.71V1320.0H1181.99ZM1197.71 1294.76H1199.95V1320.0H1197.71ZM1199.95 1307.38H1202.20V1320.0H1199.95ZM1202.20 1294.76H1204.44V1320.0H1202.20ZM1352.60 1294.76H1354.84V1320.0H1352.60ZM1354.84 1307.38H1368.31V1320.0H1354.84ZM1368.31 1294.76H1372.80V1320.0H1368.31ZM1372.80 1307.38H1379.53V1320.0H1372.80ZM1379.53 1294.76H1381.78V1320.0H1379.53ZM1381.78 1307.38H1395.25V1320.0H1381.78ZM1395.25 1294.76H1397.49V1320.0H1395.25ZM1397.49 1307.38H1404.23V1320.0H1397.49ZM1404.23 1282.14H1406.47V1320.0H1404.23ZM1406.47 1307.38H1410.96V1320.0H1406.47ZM1410.96 1294.76H1413.21V1320.0H1410.96ZM1413.21 1307.38H1424.43V1320.0H1413.21ZM1424.43 1294.76H1426.67V1320.0H1424.43ZM1426.67 1307.38H1433.41V1320.0H1426.67ZM1433.41 1294.76H1435.65V1320.0H1433.41ZM1435.65 1307.38H1444.63V1320.0H1435.65ZM1444.63 1294.76H1446.88V1320.0H1444.63ZM1446.88 1307.38H1451.37V1320.0H1446.88ZM1451.37 1294.76H1453.61V1320.0H1451.37ZM1453.61 1307.38H1460.35V1320.0H1453.61ZM1460.35 1294.76H1462.59V1320.0H1460.35ZM1462.59 1307.38H1464.84V1320.0H1462.59ZM1464.84 1294.76H1469.33V1320.0H1464.84ZM1469.33 1307.38H1471.57V1320.0H1469.33ZM1471.57 1294.76H1473.82V1320.0H1471.57ZM1473.82 1307.38H1476.06V1320.0H1473.82ZM1476.06 1294.76H1478.30V1320.0H1476.06ZM1478.30 1307.38H1480.55V1320.0H1478.30ZM1480.55 1294.76H1482.79V1320.0H1480.55ZM1482.79 1307.38H1485.04V1320.0H1482.79ZM1485.04 1294.76H1507.49V1320.0H1485.04ZM1507.49 1282.14H1509.73V1320.0H1507.49ZM1509.73 1294.76H1518.71V1320.0H1509.73ZM1518.71 1244.28H1520.96V1320.0H1518.71ZM1520.96 1017.12H1525.45V1320.0H1520.96ZM1525.45 1244.28H1527.69V1320.0H1525.45ZM1675.85 1307.38H1678.09V1320.0H1675.85ZM1678.09 1294.76H1680.34V1320.0H1678.09ZM1680.34 1307.38H1684.83V1320.0H1680.34ZM1684.83 1282.14H1687.07V1320.0H1684.83ZM1687.07 1294.76H1689.32V1320.0H1687.07ZM1689.32 1269.52H1693.80V1320.0H1689.32ZM1693.80 1294.76H1698.29V1320.0H1693.80ZM1698.29 1307.38H1700.54V1320.0H1698.29ZM1700.54 1294.76H1707.27V1320.0H1700.54ZM1707.27 1307.38H1709.52V1320.0H1707.27ZM1709.52 1294.76H1711.76V1320.0H1709.52ZM1711.76 1307.38H1714.01V1320.0H1711.76ZM1714.01 1294.76H1716.25V1320.0H1714.01ZM1716.25 1307.38H1718.50V1320.0H1716.25ZM1718.50 1294.76H1725.23V1320.0H1718.50ZM1725.23 1307.38H1727.48V1320.0H1725.23ZM1727.48 1294.76H1734.21V1320.0H1727.48ZM1734.21 1307.38H1736.46V1320.0H1734.21ZM1736.46 1294.76H1740.95V1320.0H1736.46ZM1740.95 1307.38H1745.43V1320.0H1740.95ZM1745.43 1294.76H1747.68V1320.0H1745.43ZM1747.68 1307.38H1754.41V1320.0H1747.68ZM1754.41 1294.76H1756.66V1320.0H1754.41ZM1756.66 1307.38H1763.39V1320.0H1756.66ZM1763.39 1294.76H1765.64V1320.0H1763.39ZM1765.64 1307.38H1770.13V1320.0H1765.64ZM1770.13 1294.76H1774.62V1320.0H1770.13ZM1774.62 1307.38H1779.11V1320.0H1774.62ZM1779.11 1294.76H1781.35V1320.0H1779.11ZM1781.35 1307.38H1785.84V1320.0H1781.35ZM1785.84 1294.76H1790.33V1320.0H1785.84ZM1790.33 1307.38H1794.82V1320.0H1790.33ZM1794.82 1294.76H1797.07V1320.0H1794.82ZM1797.07 1307.38H1801.55V1320.0H1797.07ZM1801.55 1294.76H1808.29V1320.0H1801.55ZM1808.29 1307.38H1812.78V1320.0H1808.29ZM1812.78 1294.76H1835.23V1320.0H1812.78ZM1835.23 1307.38H1837.47V1320.0H1835.23ZM1837.47 1294.76H1839.72V1320.0H1837.47ZM1839.72 1307.38H1844.21V1320.0H1839.72ZM1844.21 1294.76H1862.16V1320.0H1844.21ZM1862.16 1307.38H1866.65V1320.0H1862.16ZM1866.65 1294.76H1868.90V1320.0H1866.65ZM1868.90 1307.38H1873.39V1320.0H1868.90ZM1873.39 1294.76H1904.82V1320.0H1873.39ZM1904.82 1282.14H1907.06V1320.0H1904.82ZM1907.06 1294.76H1931.75V1320.0H1907.06ZM1931.75 1307.38H1934.00V1320.0H1931.75ZM1934.00 1294.76H1936.24V1320.0H1934.00ZM1936.24 1307.38H1940.73V1320.0H1936.24ZM1940.73 1294.76H1942.98V1320.0H1940.73ZM1942.98 1307.38H1945.22V1320.0H1942.98ZM1945.22 1294.76H1947.47V1320.0H1945.22ZM1947.47 1307.38H1949.71V1320.0H1947.47ZM1949.71 1294.76H1951.96V1320.0H1949.71ZM1951.96 1307.38H1956.45V1320.0H1951.96ZM1956.45 1294.76H1958.69V1320.0H1956.45ZM1958.69 1307.38H1963.18V1320.0H1958.69ZM1963.18 1294.76H1965.42V1320.0H1963.18ZM1965.42 1307.38H1969.91V1320.0H1965.42ZM1969.91 1294.76H1972.16V1320.0H1969.91ZM1972.16 1307.38H1974.40V1320.0H1972.16ZM1974.40 1294.76H1976.65V1320.0H1974.40ZM1976.65 1307.38H1981.14V1320.0H1976.65ZM1981.14 1294.76H1983.38V1320.0H1981.14ZM1983.38 1307.38H1990.12V1320.0H1983.38ZM1990.12 1294.76H1992.36V1320.0H1990.12ZM1992.36 1307.38H1996.85V1320.0H1992.36ZM1996.85 1294.76H1999.10V1320.0H1996.85ZM1999.10 1307.38H2003.59V1320.0H1999.10ZM2003.59 1294.76H2005.83V1320.0H2003.59ZM2005.83 1307.38H2008.08V1320.0H2005.83ZM2008.08 1282.14H2010.32V1320.0H2008.08ZM2010.32 1294.76H2064.20V1320.0H2010.32ZM2064.20 1307.38H2066.44V1320.0H2064.20ZM2066.44 1294.76H2068.68V1320.0H2066.44ZM2068.68 1307.38H2070.93V1320.0H2068.68ZM2070.93 1294.76H2073.17V1320.0H2070.93ZM2073.17 1307.38H2075.42V1320.0H2073.17ZM2075.42 1294.76H2077.66V1320.0H2075.42ZM2077.66 1307.38H2079.91V1320.0H2077.66ZM2079.91 1294.76H2082.15V1320.0H2079.91ZM2082.15 1307.38H2084.40V1320.0H2082.15ZM2084.40 1294.76H2086.64V1320.0H2084.40ZM2086.64 1307.38H2088.89V1320.0H2086.64ZM2088.89 1294.76H2091.13V1320.0H2088.89ZM2091.13 1307.38H2093.38V1320.0H2091.13ZM2093.38 1294.76H2097.87V1320.0H2093.38ZM2097.87 1307.38H2100.11V1320.0H2097.87ZM2100.11 1294.76H2104.60V1320.0H2100.11ZM2104.60 1282.14H2106.85V1320.0H2104.60ZM2106.85 1294.76H2109.09V1320.0H2106.85ZM2109.09 1307.38H2113.58V1320.0H2109.09ZM2113.58 1294.76H2115.83V1320.0H2113.58ZM2115.83 1307.38H2118.07V1320.0H2115.83ZM2118.07 1294.76H2122.56V1320.0H2118.07ZM2122.56 1307.38H2124.80V1320.0H2122.56ZM2124.80 1294.76H2127.05V1320.0H2124.80ZM2127.05 1307.38H2129.29V1320.0H2127.05ZM2129.29 1294.76H2133.78V1320.0H2129.29ZM2133.78 1307.38H2136.03V1320.0H2133.78ZM2136.03 1294.76H2140.52V1320.0H2136.03ZM2140.52 1307.38H2142.76V1320.0H2140.52ZM2142.76 1282.14H2145.01V1320.0H2142.76ZM2145.01 1294.76H2147.25V1320.0H2145.01ZM2147.25 1282.14H2149.50V1320.0H2147.25ZM2149.50 1294.76H2151.74V1320.0H2149.50ZM2151.74 1282.14H2156.23V1320.0H2151.74ZM2156.23 1294.76H2158.48V1320.0H2156.23ZM2158.48 1307.38H2160.72V1320.0H2158.48ZM2160.72 1294.76H2162.97V1320.0H2160.72ZM2162.97 1307.38H2165.21V1320.0H2162.97ZM2165.21 1294.76H2171.95V1320.0H2165.21ZM2171.95 1282.14H2174.19V1320.0H2171.95ZM2174.19 1294.76H2176.43V1320.0H2174.19ZM2176.43 1282.14H2178.68V1320.0H2176.43ZM2178.68 1294.76H2180.92V1320.0H2178.68ZM2180.92 1282.14H2185.41V1320.0H2180.92ZM2185.41 1307.38H2187.66V1320.0H2185.41ZM2187.66 1294.76H2196.64V1320.0H2187.66ZM2196.64 1282.14H2221.33V1320.0H2196.64ZM2221.33 1294.76H2223.58V1320.0H2221.33ZM2223.58 1282.14H2225.82V1320.0H2223.58ZM2225.82 1294.76H2228.07V1320.0H2225.82ZM2228.07 1282.14H2230.31V1320.0H2228.07ZM2230.31 1294.76H2237.04V1320.0H2230.31ZM2237.04 1282.14H2239.29V1320.0H2237.04ZM2239.29 1294.76H2241.53V1320.0H2239.29ZM2241.53 1282.14H2243.78V1320.0H2241.53ZM2243.78 1294.76H2246.02V1320.0H2243.78ZM2246.02 1282.14H2248.27V1320.0H2246.02ZM2248.27 1294.76H2252.76V1320.0H2248.27ZM2252.76 1307.38H2255.00V1320.0H2252.76ZM2255.00 1294.76H2257.25V1320.0H2255.00ZM2257.25 1307.38H2259.49V1320.0H2257.25ZM2259.49 1294.76H2261.74V1320.0H2259.49ZM2261.74 1307.38H2266.23V1320.0H2261.74ZM2266.23 1294.76H2268.47V1320.0H2266.23ZM2268.47 1307.38H2270.72V1320.0H2268.47ZM2270.72 1294.76H2272.96V1320.0H2270.72ZM2272.96 1307.38H2275.21V1320.0H2272.96ZM2275.21 1294.76H2277.45V1320.0H2275.21ZM2277.45 1307.38H2279.70V1320.0H2277.45ZM2279.70 1294.76H2281.94V1320.0H2279.70ZM2281.94 1307.38H2284.18V1320.0H2281.94ZM2284.18 1294.76H2286.43V1320.0H2284.18ZM2286.43 1307.38H2288.67V1320.0H2286.43ZM2288.67 1294.76H2290.92V1320.0H2288.67ZM2290.92 1307.38H2293.16V1320.0H2290.92ZM2293.16 1294.76H2302.14V1320.0H2293.16ZM2302.14 1307.38H2306.63V1320.0H2302.14ZM2306.63 1294.76H2308.88V1320.0H2306.63ZM2308.88 1307.38H2311.12V1320.0H2308.88Z" fill="#a0ecc4"/>
<path d="M234.69 1282.14H239.18V1320.0H234.69ZM239.18 1269.52H241.42V1320.0H239.18ZM241.42 1282.14H243.67V1320.0H241.42ZM243.67 1269.52H252.65V1320.0H243.67ZM252.65 1282.14H254.89V1320.0H252.65ZM254.89 1269.52H257.14V1320.0H254.89ZM257.14 1294.76H259.38V1320.0H257.14ZM259.38 1282.14H261.63V1320.0H259.38ZM261.63 1294.76H266.12V1320.0H261.63ZM266.12 1282.14H268.36V1320.0H266.12ZM268.36 1294.76H272.85V1320.0H268.36ZM272.85 1282.14H277.34V1320.0H272.85ZM277.34 1294.76H286.32V1320.0H277.34ZM286.32 1307.38H288.57V1320.0H286.32ZM288.57 1294.76H290.81V1320.0H288.57ZM290.81 1307.38H295.30V1320.0H290.81ZM295.30 1294.76H297.54V1320.0H295.30ZM297.54 1307.38H299.79V1320.0H297.54ZM299.79 1294.76H302.03V1320.0H299.79ZM302.03 1307.38H304.28V1320.0H302.03ZM304.28 1294.76H306.52V1320.0H304.28ZM306.52 1307.38H308.77V1320.0H306.52ZM308.77 1294.76H311.01V1320.0H308.77ZM311.01 1307.38H313.26V1320.0H311.01ZM313.26 1282.14H317.75V1320.0H313.26ZM317.75 1294.76H319.99V1320.0H317.75ZM319.99 1307.38H322.24V1320.0H319.99ZM322.24 1294.76H333.46V1320.0H322.24ZM333.46 1307.38H337.95V1320.0H333.46ZM337.95 1294.76H340.20V1320.0H337.95ZM340.20 1307.38H346.93V1320.0H340.20ZM346.93 1294.76H349.17V1320.0H346.93ZM349.17 1307.38H353.66V1320.0H349.17ZM353.66 1294.76H355.91V1320.0H353.66ZM355.91 1307.38H360.40V1320.0H355.91ZM360.40 1294.76H364.89V1320.0H360.40ZM364.89 1307.38H369.38V1320.0H364.89ZM369.38 1294.76H371.62V1320.0H369.38ZM371.62 1307.38H378.36V1320.0H371.62ZM378.36 1294.76H382.85V1320.0H378.36ZM557.94 1282.14H575.90V1320.0H557.94ZM575.90 1130.70H578.14V1320.0H575.90ZM578.14 1244.28H580.39V1320.0H578.14ZM580.39 1231.66H582.63V1320.0H580.39ZM582.63 1269.52H584.88V1320.0H582.63ZM584.88 1256.90H587.12V1320.0H584.88ZM587.12 1282.14H589.37V1320.0H587.12ZM589.37 1269.52H591.61V1320.0H589.37ZM591.61 1219.04H593.86V1320.0H591.61ZM593.86 1269.52H596.10V1320.0H593.86ZM596.10 1282.14H598.35V1320.0H596.10ZM598.35 1231.66H600.59V1320.0H598.35ZM600.59 1181.18H602.84V1320.0H600.59ZM602.84 1042.36H605.08V1320.0H602.84ZM605.08 1017.12H607.33V1320.0H605.08ZM607.33 1294.76H614.06V1320.0H607.33ZM614.06 1282.14H616.30V1320.0H614.06ZM616.30 1244.28H618.55V1320.0H616.30ZM618.55 1282.14H627.53V1320.0H618.55ZM627.53 1206.42H629.77V1320.0H627.53ZM629.77 1155.94H632.02V1320.0H629.77ZM632.02 1294.76H634.26V1320.0H632.02ZM634.26 1282.14H638.75V1320.0H634.26ZM638.75 1294.76H641.00V1320.0H638.75ZM641.00 1307.38H645.49V1320.0H641.00ZM645.49 1294.76H647.73V1320.0H645.49ZM647.73 1307.38H649.98V1320.0H647.73ZM649.98 1282.14H652.22V1320.0H649.98ZM652.22 1244.28H654.47V1320.0H652.22ZM654.47 1029.74H656.71V1320.0H654.47ZM656.71 979.26H658.96V1320.0H656.71ZM658.96 1307.38H661.20V1320.0H658.96ZM661.20 1219.04H663.45V1320.0H661.20ZM663.45 954.02H665.69V1320.0H663.45ZM665.69 1054.98H667.93V1320.0H665.69ZM667.93 1294.76H672.42V1320.0H667.93ZM672.42 1143.32H674.67V1320.0H672.42ZM674.67 903.54H676.91V1320.0H674.67ZM676.91 1282.14H679.16V1320.0H676.91ZM679.16 1269.52H683.65V1320.0H679.16ZM683.65 1231.66H685.89V1320.0H683.65ZM685.89 954.02H688.14V1320.0H685.89ZM688.14 928.78H690.38V1320.0H688.14ZM690.38 1181.18H692.63V1320.0H690.38ZM692.63 1231.66H694.87V1320.0H692.63ZM694.87 1219.04H697.12V1320.0H694.87ZM697.12 1193.80H699.36V1320.0H697.12ZM699.36 1168.56H701.61V1320.0H699.36ZM701.61 1282.14H706.10V1320.0H701.61ZM881.19 1294.76H883.43V1320.0H881.19ZM883.43 1282.14H887.92V1320.0H883.43ZM887.92 1269.52H890.17V1320.0H887.92ZM890.17 1282.14H892.41V1320.0H890.17ZM892.41 1294.76H894.66V1320.0H892.41ZM894.66 1193.80H896.90V1320.0H894.66ZM896.90 1181.18H899.15V1320.0H896.90ZM899.15 1092.84H901.39V1320.0H899.15ZM901.39 903.54H903.64V1320.0H901.39ZM903.64 890.92H905.88V1320.0H903.64ZM905.88 1269.52H908.13V1320.0H905.88ZM908.13 1294.76H910.37V1320.0H908.13ZM910.37 1282.14H912.62V1320.0H910.37ZM912.62 1294.76H914.86V1320.0H912.62ZM914.86 1269.52H917.11V1320.0H914.86ZM917.11 1294.76H926.09V1320.0H917.11ZM926.09 1282.14H928.33V1320.0H926.09ZM928.33 1294.76H932.82V1320.0H928.33ZM932.82 1282.14H935.07V1320.0H932.82ZM935.07 1269.52H937.31V1320.0H935.07ZM937.31 1294.76H939.55V1320.0H937.31ZM939.55 1282.14H941.80V1320.0H939.55ZM941.80 1294.76H944.04V1320.0H941.80ZM944.04 1269.52H946.29V1320.0H944.04ZM946.29 1294.76H953.02V1320.0H946.29ZM953.02 1269.52H955.27V1320.0H953.02ZM955.27 1294.76H957.51V1320.0H955.27ZM957.51 1155.94H962.00V1320.0H957.51ZM962.00 1143.32H964.25V1320.0H962.00ZM964.25 1294.76H970.98V1320.0H964.25ZM970.98 1282.14H973.23V1320.0H970.98ZM973.23 1219.04H975.47V1320.0H973.23ZM975.47 966.64H977.72V1320.0H975.47ZM977.72 1017.12H979.96V1320.0H977.72ZM979.96 928.78H982.21V1320.0H979.96ZM982.21 1294.76H986.70V1320.0H982.21ZM986.70 1206.42H988.94V1320.0H986.70ZM988.94 1282.14H993.43V1320.0H988.94ZM993.43 1307.38H995.67V1320.0H993.43ZM995.67 1155.94H997.92V1320.0H995.67ZM997.92 1206.42H1000.16V1320.0H997.92ZM1000.16 1193.80H1002.41V1320.0H1000.16ZM1002.41 1054.98H1004.65V1320.0H1002.41ZM1004.65 1219.04H1009.14V1320.0H1004.65ZM1009.14 1054.98H1011.39V1320.0H1009.14ZM1011.39 1143.32H1013.63V1320.0H1011.39ZM1013.63 1256.90H1015.88V1320.0H1013.63ZM1015.88 1231.66H1020.37V1320.0H1015.88ZM1020.37 1269.52H1024.86V1320.0H1020.37ZM1024.86 1282.14H1029.35V1320.0H1024.86ZM1204.44 1294.76H1208.93V1320.0H1204.44ZM1208.93 1282.14H1211.17V1320.0H1208.93ZM1211.17 1294.76H1213.42V1320.0H1211.17ZM1213.42 1282.14H1215.66V1320.0H1213.42ZM1215.66 1294.76H1217.91V1320.0H1215.66ZM1217.91 1155.94H1220.15V1320.0H1217.91ZM1220.15 903.54H1222.40V1320.0H1220.15ZM1222.40 916.16H1224.64V1320.0H1222.40ZM1224.64 1231.66H1226.89V1320.0H1224.64ZM1226.89 1219.04H1229.13V1320.0H1226.89ZM1229.13 1206.42H1231.38V1320.0H1229.13ZM1231.38 1282.14H1238.11V1320.0H1231.38ZM1238.11 1206.42H1240.36V1320.0H1238.11ZM1240.36 928.78H1242.60V1320.0H1240.36ZM1242.60 1282.14H1247.09V1320.0H1242.60ZM1247.09 1155.94H1249.34V1320.0H1247.09ZM1249.34 1231.66H1251.58V1320.0H1249.34ZM1251.58 1244.28H1253.83V1320.0H1251.58ZM1253.83 1269.52H1256.07V1320.0H1253.83ZM1256.07 1092.84H1258.32V1320.0H1256.07ZM1258.32 954.02H1260.56V1320.0H1258.32ZM1260.56 865.68H1262.80V1320.0H1260.56ZM1262.80 1282.14H1265.05V1320.0H1262.80ZM1265.05 1294.76H1269.54V1320.0H1265.05ZM1269.54 1206.42H1271.78V1320.0H1269.54ZM1271.78 941.40H1274.03V1320.0H1271.78ZM1274.03 1294.76H1278.52V1320.0H1274.03ZM1278.52 1307.38H1280.76V1320.0H1278.52ZM1280.76 1206.42H1283.01V1320.0H1280.76ZM1283.01 903.54H1285.25V1320.0H1283.01ZM1285.25 1294.76H1289.74V1320.0H1285.25ZM1289.74 1256.90H1291.99V1320.0H1289.74ZM1291.99 1294.76H1294.23V1320.0H1291.99ZM1294.23 1307.38H1298.72V1320.0H1294.23ZM1298.72 941.40H1300.97V1320.0H1298.72ZM1300.97 966.64H1303.21V1320.0H1300.97ZM1303.21 1219.04H1305.46V1320.0H1303.21ZM1305.46 1269.52H1307.70V1320.0H1305.46ZM1307.70 1294.76H1312.19V1320.0H1307.70ZM1312.19 1282.14H1314.43V1320.0H1312.19ZM1314.43 1307.38H1321.17V1320.0H1314.43ZM1321.17 1092.84H1323.41V1320.0H1321.17ZM1323.41 1244.28H1325.66V1320.0H1323.41ZM1325.66 1282.14H1327.90V1320.0H1325.66ZM1327.90 1231.66H1330.15V1320.0H1327.90ZM1330.15 1219.04H1332.39V1320.0H1330.15ZM1332.39 1155.94H1334.64V1320.0H1332.39ZM1334.64 1282.14H1339.13V1320.0H1334.64ZM1339.13 1307.38H1341.37V1320.0H1339.13ZM1341.37 1294.76H1343.62V1320.0H1341.37ZM1343.62 1282.14H1345.86V1320.0H1343.62ZM1345.86 1307.38H1352.60V1320.0H1345.86ZM1527.69 1256.90H1532.18V1320.0H1527.69ZM1532.18 1244.28H1534.42V1320.0H1532.18ZM1534.42 1231.66H1536.67V1320.0H1534.42ZM1536.67 1244.28H1543.40V1320.0H1536.67ZM1543.40 1155.94H1545.65V1320.0H1543.40ZM1545.65 890.92H1547.89V1320.0H1545.65ZM1547.89 865.68H1550.14V1320.0H1547.89ZM1550.14 1244.28H1552.38V1320.0H1550.14ZM1552.38 1282.14H1554.63V1320.0H1552.38ZM1554.63 1294.76H1559.12V1320.0H1554.63ZM1559.12 1307.38H1561.36V1320.0H1559.12ZM1561.36 1294.76H1565.85V1320.0H1561.36ZM1565.85 1282.14H1568.10V1320.0H1565.85ZM1568.10 1206.42H1570.34V1320.0H1568.10ZM1570.34 878.30H1572.59V1320.0H1570.34ZM1572.59 991.88H1574.83V1320.0H1572.59ZM1574.83 1029.74H1577.08V1320.0H1574.83ZM1577.08 941.40H1579.32V1320.0H1577.08ZM1579.32 1269.52H1581.57V1320.0H1579.32ZM1581.57 1294.76H1583.81V1320.0H1581.57ZM1583.81 1282.14H1590.54V1320.0H1583.81ZM1590.54 1269.52H1592.79V1320.0H1590.54ZM1592.79 1282.14H1595.03V1320.0H1592.79ZM1595.03 1256.90H1597.28V1320.0H1595.03ZM1597.28 1168.56H1599.52V1320.0H1597.28ZM1599.52 1282.14H1606.26V1320.0H1599.52ZM1606.26 1269.52H1608.50V1320.0H1606.26ZM1608.50 1307.38H1612.99V1320.0H1608.50ZM1612.99 1294.76H1619.73V1320.0H1612.99ZM1619.73 1282.14H1626.46V1320.0H1619.73ZM1626.46 1294.76H1628.71V1320.0H1626.46ZM1628.71 1269.52H1633.20V1320.0H1628.71ZM1633.20 1294.76H1635.44V1320.0H1633.20ZM1635.44 1282.14H1637.68V1320.0H1635.44ZM1637.68 1294.76H1639.93V1320.0H1637.68ZM1639.93 1256.90H1642.17V1320.0H1639.93ZM1642.17 1168.56H1646.66V1320.0H1642.17ZM1646.66 1231.66H1648.91V1320.0H1646.66ZM1648.91 1307.38H1653.40V1320.0H1648.91ZM1653.40 1294.76H1655.64V1320.0H1653.40ZM1655.64 1307.38H1657.89V1320.0H1655.64ZM1657.89 1294.76H1660.13V1320.0H1657.89ZM1660.13 1307.38H1664.62V1320.0H1660.13ZM1664.62 1294.76H1666.87V1320.0H1664.62ZM1666.87 1307.38H1675.85V1320.0H1666.87Z" fill="#238f6f"/>
<rect x="153" y="815.2" width="2" height="506.79999999999995" fill="#7c7c7c"/>
<rect x="153" y="1320.0" width="2264.75" height="2" fill="#8a8a8a"/>
<rect x="144" y="1320" width="10" height="1" fill="#9a9a9a"/>
<text x="133" y="1327" text-anchor="end" font-family="Liberation Sans" font-size="20" fill="#333">0</text>
<rect x="144" y="1257" width="10" height="1" fill="#9a9a9a"/>
<text x="133" y="1264" text-anchor="end" font-family="Liberation Sans" font-size="20" fill="#333">5</text>
<rect x="144" y="1194" width="10" height="1" fill="#9a9a9a"/>
<text x="133" y="1201" text-anchor="end" font-family="Liberation Sans" font-size="20" fill="#333">10</text>
<rect x="144" y="1131" width="10" height="1" fill="#9a9a9a"/>
<text x="133" y="1138" text-anchor="end" font-family="Liberation Sans" font-size="20" fill="#333">15</text>
<rect x="144" y="1068" width="10" height="1" fill="#9a9a9a"/>
<text x="133" y="1075" text-anchor="end" font-family="Liberation Sans" font-size="20" fill="#333">20</text>
<rect x="144" y="1004" width="10" height="1" fill="#9a9a9a"/>
<text x="133" y="1011" text-anchor="end" font-family="Liberation Sans" font-size="20" fill="#333">25</text>
<rect x="144" y="941" width="10" height="1" fill="#9a9a9a"/>
<text x="133" y="948" text-anchor="end" font-family="Liberation Sans" font-size="20" fill="#333">30</text>
<rect x="144" y="878" width="10" height="1" fill="#9a9a9a"/>
<text x="133" y="885" text-anchor="end" font-family="Liberation Sans" font-size="20" fill="#333">35</text>
<rect x="144" y="815" width="10" height="1" fill="#9a9a9a"/>
<text x="133" y="822" text-anchor="end" font-family="Liberation Sans" font-size="20" fill="#333">40</text>
<rect x="154.50" y="1322.0" width="1" height="10" fill="#b8b8b8"/>
<text x="155.00" y="1357" text-anchor="middle" font-family="Liberation Sans" font-size="22" fill="#222">lun. 06</text>
<rect x="477.75" y="1322.0" width="1" height="10" fill="#b8b8b8"/>
<text x="478.25" y="1357" text-anchor="middle" font-family="Liberation Sans" font-size="22" fill="#222">mar. 07</text>
<rect x="801.00" y="1322.0" width="1" height="10" fill="#b8b8b8"/>
<text x="801.50" y="1357" text-anchor="middle" font-family="Liberation Sans" font-size="22" fill="#222">mer. 08</text>
<rect x="1124.25" y="1322.0" width="1" height="10" fill="#b8b8b8"/>
<text x="1124.75" y="1357" text-anchor="middle" font-family="Liberation Sans" font-size="22" fill="#222">jeu. 09</text>
<rect x="1447.50" y="1322.0" width="1" height="10" fill="#b8b8b8"/>
<text x="1448.00" y="1357" text-anchor="middle" font-family="Liberation Sans" font-size="22" fill="#222">ven. 10</text>
<rect x="1770.75" y="1322.0" width="1" height="10" fill="#b8b8b8"/>
<text x="1771.25" y="1357" text-anchor="middle" font-family="Liberation Sans" font-size="22" fill="#222">sam. 11</text>
<rect x="2094.00" y="1322.0" width="1" height="10" fill="#b8b8b8"/>
<text x="2094.50" y="1357" text-anchor="middle" font-family="Liberation Sans" font-size="22" fill="#222">dim. 12</text>
<text transform="translate(86,1067) rotate(-90)" text-anchor="middle" font-family="Liberation Sans" font-size="22" fill="#444">kW</text>
</svg>
<!-- top right title and stats -->
<div class="abs" style="left:1990px;top:52px;width:416px;height:45px;background:#fff;border-radius:0 0 7px 0"></div>
<div class="abs" style="left:1990px;top:62px;width:416px;text-align:center;font-weight:bold;font-size:25.5px;color:#111;line-height:38px">LHB-site-L739</div>
<div class="box" style="left:1990px;top:106px;width:416px;height:62px">Consommation: 41 kWh</div>
<div class="box" style="left:1990px;top:176px;width:416px;height:62px">P Max :  3 kW</div>
<div class="box" style="left:1990px;top:246px;width:416px;height:62px">P min : 0 kW</div>
<!-- date label -->
<div class="abs" style="left:1048px;top:542px;width:522px;height:70px;background:rgba(255,255,255,0.9);border-radius:12px;font-weight:bold;font-size:32.5px;color:#111;display:flex;align-items:center;justify-content:center;padding:2px 0 0 10px">dimanche 12 avril 2026</div>
<!-- bottom stats -->
<div class="box" style="left:560px;top:805px;width:416px;height:61px">Consommation: 482 kWh</div>
<div class="box" style="left:1099px;top:805px;width:414px;height:61px">P Max :  36 kW</div>
<div class="box" style="left:1609px;top:805px;width:414px;height:61px">P min : 0 kW</div>
<!-- ecowatt logo -->
<svg class="abs" style="left:177px;top:49px" width="481" height="78" viewBox="0 0 481 78">
<defs>
<linearGradient id="eco" x1="0" x2="0" y1="0" y2="1"><stop offset="0" stop-color="#00f2cc"/><stop offset="0.66" stop-color="#00f2cc"/><stop offset="0.66" stop-color="#00b898"/><stop offset="1" stop-color="#00b898"/></linearGradient>
</defs>
<rect width="481" height="78" fill="#0a0a18"/>
<clipPath id="ecoclip"><polygon points="0,0 100,0 100,45 0,54"/></clipPath>
<text x="10" y="61" font-family="Liberation Sans" font-weight="bold" font-size="56" fill="#00b898" textLength="84" lengthAdjust="spacingAndGlyphs">éco</text>
<text x="10" y="61" font-family="Liberation Sans" font-weight="bold" font-size="56" fill="#00f2cc" textLength="84" lengthAdjust="spacingAndGlyphs" clip-path="url(#ecoclip)">éco</text>
<text x="95" y="61" font-family="Liberation Sans" font-weight="bold" font-size="56" fill="#fff" textLength="103" lengthAdjust="spacingAndGlyphs">watt</text>
<line x1="137" y1="18" x2="123.5" y2="59" stroke="#fff" stroke-width="6.5" stroke-linecap="round"/>
<ellipse cx="257" cy="40" rx="26" ry="28" fill="#00b4e2"/>
<text x="257" y="48" text-anchor="middle" font-family="Liberation Sans" font-size="23" fill="#fff" textLength="32" lengthAdjust="spacingAndGlyphs">Rte</text>
<text x="292" y="31" font-family="Liberation Sans" font-size="12" fill="#00a6d8" textLength="44" lengthAdjust="spacingAndGlyphs">Le réseau</text>
<text x="292" y="44" font-family="Liberation Sans" font-size="12" fill="#00a6d8" textLength="60" lengthAdjust="spacingAndGlyphs">de transport</text>
<text x="292" y="57" font-family="Liberation Sans" font-size="12" fill="#00a6d8" textLength="56" lengthAdjust="spacingAndGlyphs">d’électricité</text>
<rect x="370" y="12" width="100" height="56" fill="#fff"/>
<rect x="376" y="20" width="6" height="7" fill="#1f3a93"/><rect x="382" y="20" width="6" height="7" fill="#e8e8f0"/><rect x="388" y="20" width="7" height="7" fill="#e1000f"/>
<text x="376" y="37" font-family="Liberation Sans" font-weight="bold" font-size="8" fill="#222" textLength="43" lengthAdjust="spacingAndGlyphs">RÉPUBLIQUE</text>
<text x="376" y="45" font-family="Liberation Sans" font-weight="bold" font-size="8" fill="#222" textLength="38" lengthAdjust="spacingAndGlyphs">FRANÇAISE</text>
<text x="376" y="53" font-family="Liberation Sans" font-style="italic" font-size="4" fill="#555">Liberté</text>
<text x="376" y="58" font-family="Liberation Sans" font-style="italic" font-size="4" fill="#555">Égalité</text>
<text x="376" y="63" font-family="Liberation Sans" font-style="italic" font-size="4" fill="#555">Fraternité</text>
<rect x="430.5" y="17.5" width="35" height="45" fill="#fff" stroke="#4a7cc8" stroke-width="1.2"/>
<text x="448" y="27" text-anchor="middle" font-family="Liberation Sans" font-weight="bold" font-size="6.5" fill="#e2231a" textLength="24" lengthAdjust="spacingAndGlyphs">ADEME</text>
<circle cx="448" cy="38" r="8.5" fill="#2a5bb0"/>
<path d="M444 33 q3 2 2 5 q-2 2 1 5 M450 32 q2 3 4 3 M451 40 q2 1 1 4" stroke="#8fb0e8" stroke-width="1.2" fill="none"/>
<rect x="437" y="51" width="22" height="1" fill="#e2231a" opacity="0.8"/><rect x="437" y="53.5" width="22" height="1" fill="#e2231a" opacity="0.8"/><rect x="437" y="56" width="22" height="1" fill="#e2231a" opacity="0.8"/>
</svg>
<!-- J table -->
<svg class="abs" style="left:169px;top:135px" width="492" height="124" viewBox="0 0 492 124">
<defs>
<linearGradient id="tg" x1="0" x2="0" y1="0" y2="1"><stop offset="0" stop-color="#00cdae"/><stop offset="1" stop-color="#00b496"/></linearGradient>
<g id="wimg">
<rect width="106" height="56" fill="url(#tg)"/>
<path d="M14 0 C40 30 82 34 106 14 L106 0 Z" fill="#00f0c8"/>
<path d="M28 0 C50 14 84 15 106 1 L106 0 Z" fill="#00a088"/>
</g>
</defs>
<g fill="#dadada">
<rect x="0" y="0" width="492" height="4"/>
<rect x="0" y="119" width="492" height="5"/>
<rect x="0" y="0" width="4" height="124"/>
<rect x="487" y="0" width="5" height="124"/>
<rect x="120" y="0" width="5" height="124"/>
<rect x="242" y="0" width="5" height="124"/>
<rect x="364" y="0" width="6" height="124"/>
<rect x="0" y="55" width="492" height="4"/>
</g>
<use href="#wimg" x="11" y="60" transform="translate(11,60) scale(1,0.98) translate(-11,-60)"/>
<use href="#wimg" x="133" y="61"/>
<use href="#wimg" x="255" y="61"/>
<use href="#wimg" x="375" y="61"/>
<g font-family="Liberation Sans" font-size="33" fill="#000">
<text x="62" y="40" text-anchor="middle">J</text>
<text x="152" y="40" text-anchor="middle">J</text><text x="185" y="40" text-anchor="middle">+</text></g><path d="M213 22.3 L219.3 17.8 L219.3 40" fill="none" stroke="#000" stroke-width="2.6" stroke-linejoin="miter"/><g font-family="Liberation Sans" font-size="33" fill="#000">
<text x="274" y="40" text-anchor="middle">J</text><text x="307" y="40" text-anchor="middle">+</text><text x="339" y="40" text-anchor="middle" font-weight="bold">2</text>
<text x="396" y="40" text-anchor="middle">J</text><text x="429" y="40" text-anchor="middle">+</text><text x="462" y="40" text-anchor="middle" font-weight="bold">3</text>
</g>
</svg>
<!-- G2E logo -->
<svg class="abs" style="left:2323px;top:1322px" width="115" height="57" viewBox="0 0 115 57">
<rect width="115" height="57" fill="#fff"/>
<path d="M36.5 19.5 A12.3 12.3 0 1 0 38.6 28.3 L26 28.3" fill="none" stroke="#0a6cb8" stroke-width="6" stroke-linecap="butt"/>
<text x="44.5" y="42" font-family="Liberation Sans" font-weight="bold" font-size="36" fill="#0a6cb8" textLength="18.5" lengthAdjust="spacingAndGlyphs">2</text>
<path d="M70 3 L60.5 16.5 L69.5 18 L66 41 L77 17 L68.5 15.5 Z" fill="#e85c26"/>
<path d="M80 17 L101.5 17 L95.5 22.8 L75 22.8 Z M77 26.4 L95.5 26.4 L89.5 32 L71.5 32 Z M73 35.7 L94 35.7 L88 41.2 L67.5 41.2 Z" fill="#f29222"/>
<text x="71" y="12.8" font-family="Liberation Sans" font-weight="bold" font-size="7.5" fill="#e85c26" textLength="30" lengthAdjust="spacingAndGlyphs">FRANCE</text>
<rect x="17" y="44" width="74" height="1.8" fill="#5a9ad8" opacity="0.35"/>
</svg>

</body></html>
